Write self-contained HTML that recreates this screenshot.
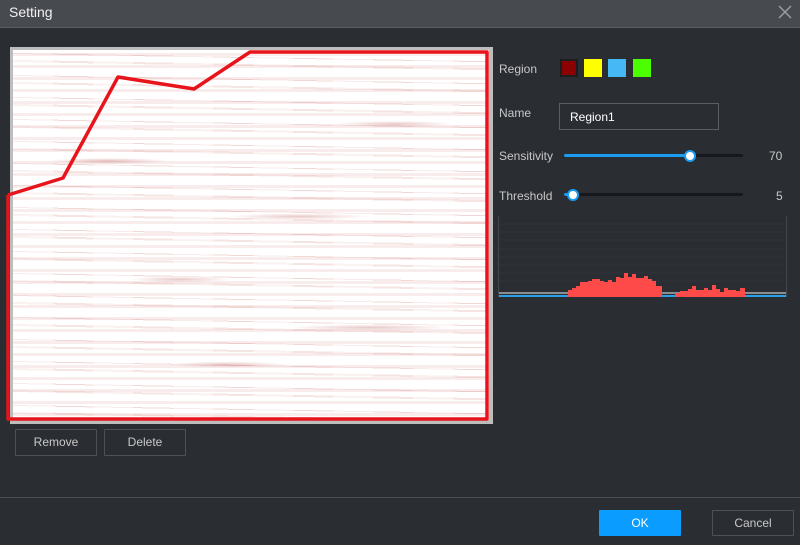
<!DOCTYPE html>
<html><head><meta charset="utf-8"><style>
*{margin:0;padding:0;box-sizing:border-box}
body{width:800px;height:545px;background:#2a2d32;font-family:"Liberation Sans",sans-serif;position:relative;overflow:hidden;color:#c8c8c8;font-size:12px}
.hdr{position:absolute;left:0;top:0;width:800px;height:28px;background:#474a4f;border-bottom:1px solid #5a5d62}
.hdr span{position:absolute;left:9px;top:4px;font-size:14px;color:#f0f0f0}
.img{position:absolute;left:10px;top:47px;width:483px;height:377px;background:#bdbdbd}
.in{position:absolute;left:3px;top:3px;width:476px;height:370px;background:
radial-gradient(ellipse 60px 3px at 20% 30%,rgba(180,70,70,.35),transparent),
radial-gradient(ellipse 70px 3px at 60% 45%,rgba(180,70,70,.3),transparent),
radial-gradient(ellipse 50px 3px at 35% 62%,rgba(180,70,70,.3),transparent),
radial-gradient(ellipse 80px 3px at 75% 75%,rgba(180,70,70,.3),transparent),
radial-gradient(ellipse 60px 3px at 45% 85%,rgba(180,70,70,.3),transparent),
radial-gradient(ellipse 60px 3px at 80% 20%,rgba(180,70,70,.3),transparent),
repeating-linear-gradient(0deg,rgba(255,255,255,0) 0 4px,rgba(200,110,110,.13) 4px 7px,rgba(255,255,255,0) 7px 12px),
repeating-linear-gradient(90deg,rgba(255,255,255,.5) 0 40px,rgba(255,255,255,0) 40px 80px),
repeating-linear-gradient(1deg,#fff 0 6px,#f6e4e2 6px 8px,#fff 8px 14px,#f1d8d6 14px 15px,#fff 15px 22px);}
.lbl{position:absolute;font-size:12px;color:#c8c8c8}
.sw{position:absolute;top:59px;width:18px;height:18px}
.btn{position:absolute;border:1px solid #4e5156;background:#2a2d32;color:#c8c8c8;font-size:12px;text-align:center;border-radius:1px}
.track{position:absolute;height:3px;background:#16181b;border-radius:2px}
.knob{position:absolute;width:12px;height:12px;border-radius:50%;background:#fff;border:2px solid #1a9cf0}
</style></head><body>
<div class="hdr"><span>Setting</span>
<svg style="position:absolute;left:778px;top:5px" width="14" height="14"><path d="M1 1L13 13M13 1L1 13" stroke="#9a9da2" stroke-width="1.5"/></svg></div>
<div class="img"><div class="in"></div></div>
<svg style="position:absolute;left:0;top:0" width="800" height="545"><polyline points="8,195 63,178 118,77 194,89 250,52 487,52 487,419 8,419 8,195" fill="none" stroke="#e8141c" stroke-width="3.5" stroke-linejoin="round"/></svg>
<div class="btn" style="left:15px;top:429px;width:82px;height:27px;line-height:25px">Remove</div>
<div class="btn" style="left:104px;top:429px;width:82px;height:27px;line-height:25px">Delete</div>

<div class="lbl" style="left:499px;top:62px">Region</div>
<div class="sw" style="left:560px;background:#8b0000;border:2px solid #1b1d20"></div>
<div class="sw" style="left:584px;background:#ffff00"></div>
<div class="sw" style="left:608px;background:#45b8f5"></div>
<div class="sw" style="left:633px;background:#4cff00"></div>
<div class="lbl" style="left:499px;top:106px">Name</div>
<div style="position:absolute;left:559px;top:103px;width:160px;height:27px;border:1px solid #5a5d62;color:#fff;font-size:12px;padding:6px 10px">Region1</div>
<div class="lbl" style="left:499px;top:149px">Sensitivity</div>
<div class="track" style="left:564px;top:154px;width:179px"></div>
<div class="track" style="left:564px;top:154px;width:126px;background:#1a9cf0"></div>
<div class="knob" style="left:684px;top:150px"></div>
<div class="lbl" style="left:769px;top:149px">70</div>
<div class="lbl" style="left:499px;top:189px">Threshold</div>
<div class="track" style="left:564px;top:193px;width:179px"></div>
<div class="track" style="left:564px;top:193px;width:8px;background:#1a9cf0"></div>
<div class="knob" style="left:567px;top:189px"></div>
<div class="lbl" style="left:776px;top:189px">5</div>

<svg style="position:absolute;left:0;top:0" width="800" height="545">
<g stroke="#30343a" stroke-width="1">
<line x1="499" y1="224" x2="786" y2="224"/><line x1="499" y1="232" x2="786" y2="232"/><line x1="499" y1="240" x2="786" y2="240"/><line x1="499" y1="249" x2="786" y2="249"/><line x1="499" y1="257" x2="786" y2="257"/><line x1="499" y1="265" x2="786" y2="265"/><line x1="499" y1="273" x2="786" y2="273"/><line x1="499" y1="281" x2="786" y2="281"/></g>
<line x1="498.5" y1="216" x2="498.5" y2="297" stroke="#44474c"/>
<line x1="786.5" y1="216" x2="786.5" y2="297" stroke="#44474c"/>
<rect x="499" y="292" width="287" height="2" fill="#8a8d92"/>
<rect x="499" y="295" width="287" height="2" fill="#2aa0ea"/>
<polygon fill="#ff4a4a" points="568,297 568,290 572,290 572,288 576,288 576,286 580,286 580,282 588,282 588,281 592,281 592,279 600,279 600,281 604,281 604,282 608,282 608,280 612,280 612,282 616,282 616,277 620,277 620,278 624,278 624,273 628,273 628,277 632,277 632,274 636,274 636,278 644,278 644,276 648,276 648,279 652,279 652,281 656,281 656,286 662,286 662,297"/>
<polygon fill="#ff4a4a" points="675,297 675,293 680,293 680,291 688,291 688,289 692,289 692,286 696,286 696,290 704,290 704,288 708,288 708,290 712,290 712,285 716,285 716,289 720,289 720,292 724,292 724,288 728,288 728,290 736,290 736,291 740,291 740,288 745,288 745,297"/>
</svg>

<div style="position:absolute;left:0;top:497px;width:800px;height:1px;background:#4a4d52"></div>
<div class="btn" style="left:599px;top:510px;width:82px;height:26px;line-height:24px;background:#0a9cff;border-color:#0a9cff;color:#fff">OK</div>
<div class="btn" style="left:712px;top:510px;width:82px;height:26px;line-height:24px">Cancel</div>
</body></html>
